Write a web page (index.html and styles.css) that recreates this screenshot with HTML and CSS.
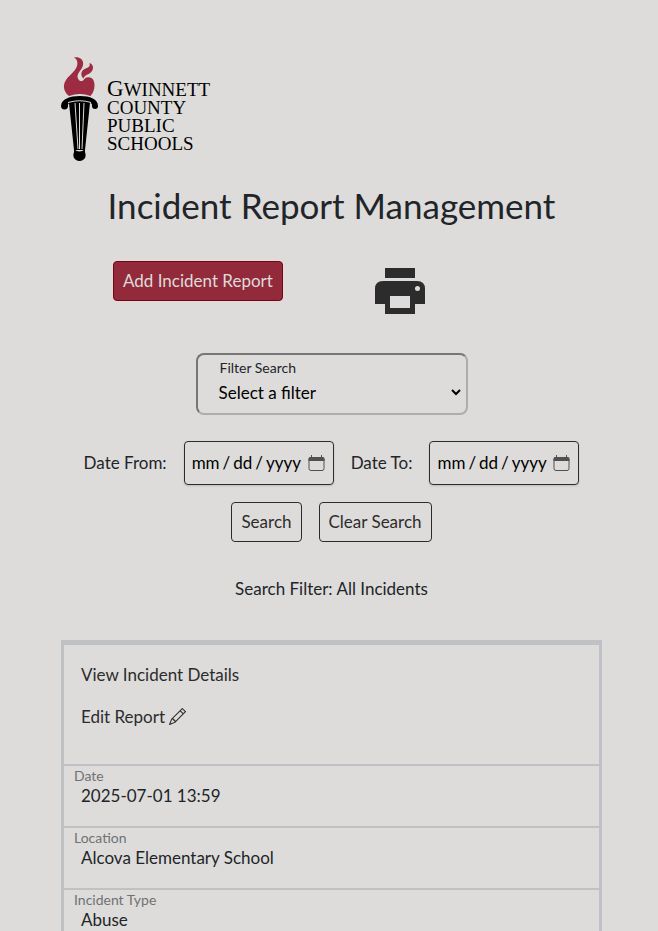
FILE: index.html
```html
<!DOCTYPE html>
<html lang="en">
<head>
<meta charset="utf-8">
<meta name="viewport" content="width=device-width, initial-scale=1">
<title>Incident Report Management</title>
<link rel="stylesheet" href="styles.css">
</head>
<body>
<main class="page">
  <div class="logo">
    <svg class="torch" viewBox="0 0 38 104" width="38" height="104" aria-hidden="true">
      <path fill="#9d2c42" d="M13 .5C19 -.5 23 3 22 8C21.500 12 17 15 16.500 19C16.500 22 18.500 24.500 21 24C23.500 23.500 23 20.500 27 20.300C31 20 33.500 23 33.500 28C33.500 33 32 36 29.500 39Q19 35 8 39C4 36 2.500 32 3 28C4 20 14 16 16 9C17 5 16 2 13 .5Z"/>
      <path fill="#9d2c42" d="M28.500 6C32 7 33 11 31 14C28.500 18 24 17 22.500 21.500C19.500 19 19.500 14 23.500 12C27 10.500 29.500 10 28.500 6Z"/>
      <path fill="#000" d="M0 49C0 42 9 39 19 39S37 42 37 49A3 3 0 0 1 31 49C31 46 30 46 28 46H10C8 46 7 46 7 49A3 3 0 0 1 0 49Z"/>
      <path fill="#000" d="M8 46H29L24 93H13Z"/>
      <path fill="none" stroke="#dddcda" d="M14 46L17 92M18.500 46V92M23 46L21 92"/>
      <path fill="none" stroke="#dddcda" d="M7 45.500Q19 42 30 45.500"/>
      <path fill="#000" d="M13 92Q18.500 97 24 92L24 95Q26 101 22 103Q18.500 105 15 103Q11 101 13 95Z"/>
    </svg>
    <div class="logo-text"><b>G</b>WINNETT<br>COUNTY<br>PUBLIC<br>SCHOOLS</div>
  </div>

  <h1>Incident Report Management</h1>

  <div class="actions">
    <div class="action"><button class="btn btn-primary" type="button">Add Incident Report</button></div>
    <div class="action">
      <button class="print" type="button" aria-label="Print">
        <svg viewBox="0 0 50 46" width="50" height="46" aria-hidden="true"><path fill="#2c2c2c" fill-rule="evenodd" d="M10 0H40V10H10ZM8 13H42Q50 13 50 21V36H40V46H10V36H0V21Q0 13 8 13ZM15 28V40H35V28ZM42.500 18a2.500 2.500 0 1 0 0 5a2.500 2.500 0 1 0 0-5Z"/></svg>
      </button>
    </div>
  </div>

  <form class="search">
    <div class="filter">
      <label for="filter">Filter Search</label>
      <select id="filter"><option>Select a filter</option></select>
    </div>
    <div class="dates">
      <label for="from">Date From:</label>
      <input id="from" type="date">
      <label for="to">Date To:</label>
      <input id="to" type="date">
    </div>
    <div class="buttons">
      <button class="btn" type="button">Search</button>
      <button class="btn" type="reset">Clear Search</button>
    </div>
  </form>

  <p class="status">Search Filter: All Incidents</p>

  <section class="report">
    <div class="links">
      <a href="#details">View Incident Details</a>
      <a href="#edit">Edit Report
        <svg viewBox="0 0 16 16" width="17" height="17" aria-hidden="true"><path fill="currentColor" d="M12.146.146a.5.5 0 0 1 .708 0l3 3a.5.5 0 0 1 0 .708l-10 10a.5.5 0 0 1-.168.110l-5 2a.5.5 0 0 1-.650-.650l2-5a.5.5 0 0 1 .110-.168zM11.207 2.500 13.500 4.793 14.793 3.500 12.500 1.207zm1.586 3L10.500 3.207 4 9.707V10h.5a.5.5 0 0 1 .5.5v.5h.5a.5.5 0 0 1 .5.5v.5h.293zm-9.761 5.175-.106.106-1.528 3.821 3.821-1.528.106-.106A.5.5 0 0 1 5 12.500V12h-.5a.5.5 0 0 1-.5-.5V11h-.5a.5.5 0 0 1-.468-.325z"/></svg>
      </a>
    </div>
    <dl class="fields">
      <div><dt>Date</dt><dd>2025-07-01 13:59</dd></div>
      <div><dt>Location</dt><dd>Alcova Elementary School</dd></div>
      <div><dt>Incident Type</dt><dd>Abuse</dd></div>
    </dl>
  </section>
</main>
</body>
</html>
```
FILE: styles.css
```css
* { box-sizing: border-box; }
html { overflow: hidden; height: 100%; }
body {
  margin: 0;
  height: 100%;
  overflow: hidden;
  background: #dddcda;
  color: #212529;
  font: 17px/24px Lato, "Noto Sans", sans-serif;
}
.page { padding: 57px 56px 0 61px; }
.logo { display: flex; gap: 8px; height: 104px; }
.logo-text {
  padding-top: 24px;
  color: #000;
  font: 19px/18px "Liberation Serif", serif;
}
.logo-text b { font-size: 23px; font-weight: 400; line-height: 16px; }
h1 {
  margin: 23px 0 0;
  font-size: 35px;
  font-weight: 400;
  line-height: 42px;
  text-align: center;
}
.actions { display: grid; grid-template-columns: 1fr 1fr; height: 127px; padding-top: 35px; }
.action:first-child { padding-left: 52px; }
.action:last-child { padding: 7px 0 0 43px; }
.btn {
  height: 40px;
  padding: 0 9px;
  border: 1px solid #2c2c2c;
  border-radius: 4px;
  background: transparent;
  color: #2c2c2c;
  font: inherit;
}
.btn-primary { border-color: #7a0410; background: #932a3b; color: #dddcda; }
.print { padding: 0; border: 0; background: none; }
.print svg { display: block; }
.filter {
  width: 272px;
  height: 62px;
  margin: 0 auto;
  padding: 3px 2px 0 17px;
  border: 2px solid;
  border-color: #767676 #adadad #adadad #767676;
  border-radius: 8px;
}
.filter label { display: block; padding-left: 5px; font-size: 14px; line-height: 20px; }
.filter select {
  display: block;
  width: 100%;
  height: 28px;
  border: 0;
  background: transparent;
  color: #000;
  font: inherit;
}
.dates { display: flex; justify-content: center; align-items: center; gap: 17px; margin-top: 26px; }
.dates input {
  width: 150px;
  height: 44px;
  padding: 0 8px 0 6px;
  border: 1px solid #2c2c2c;
  border-radius: 4px;
  background: transparent;
  box-shadow: 0 1px 2px #00000026;
  color: #000;
  font: inherit;
}
.dates input::-webkit-datetime-edit-text { padding: 0 2px; }
.dates input::-webkit-calendar-picker-indicator {
  width: 17px;
  height: 17px;
  margin: 0;
  padding: 0;
  background: url("data:image/svg+xml,%3Csvg xmlns='http://www.w3.org/2000/svg' viewBox='0 0 17 17'%3E%3Cpath fill='none' stroke='%23505050' d='M1 4V13.500Q1 15.500 3 15.500H14Q16 15.500 16 13.500V4'/%3E%3Cpath fill='%23505050' d='M.5 6V3.500Q.5 2 2 2H3V0H4V2H13V0H14V2H15Q16.500 2 16.500 3.500V6Z'/%3E%3C/svg%3E") center / 17px no-repeat;
}
.buttons { display: flex; justify-content: center; gap: 17px; margin-top: 17px; }
.status { margin: 35px 0 39px; text-align: center; }
.report { border: 3px solid #c0c1c4; border-top-width: 5px; }
.links {
  display: flex;
  flex-direction: column;
  gap: 18px;
  height: 119px;
  padding: 18px 17px;
}
.links a { color: #2c2c2c; text-decoration: none; }
.links svg { vertical-align: -2px; }
.fields { margin: 0; }
.fields div { height: 62px; border-top: 2px solid #c0c1c4; }
.fields dt { padding-left: 10px; color: #707173; font-size: 14px; line-height: 20px; }
.fields dd { margin: 0; padding-left: 17px; line-height: 20px; }
```
